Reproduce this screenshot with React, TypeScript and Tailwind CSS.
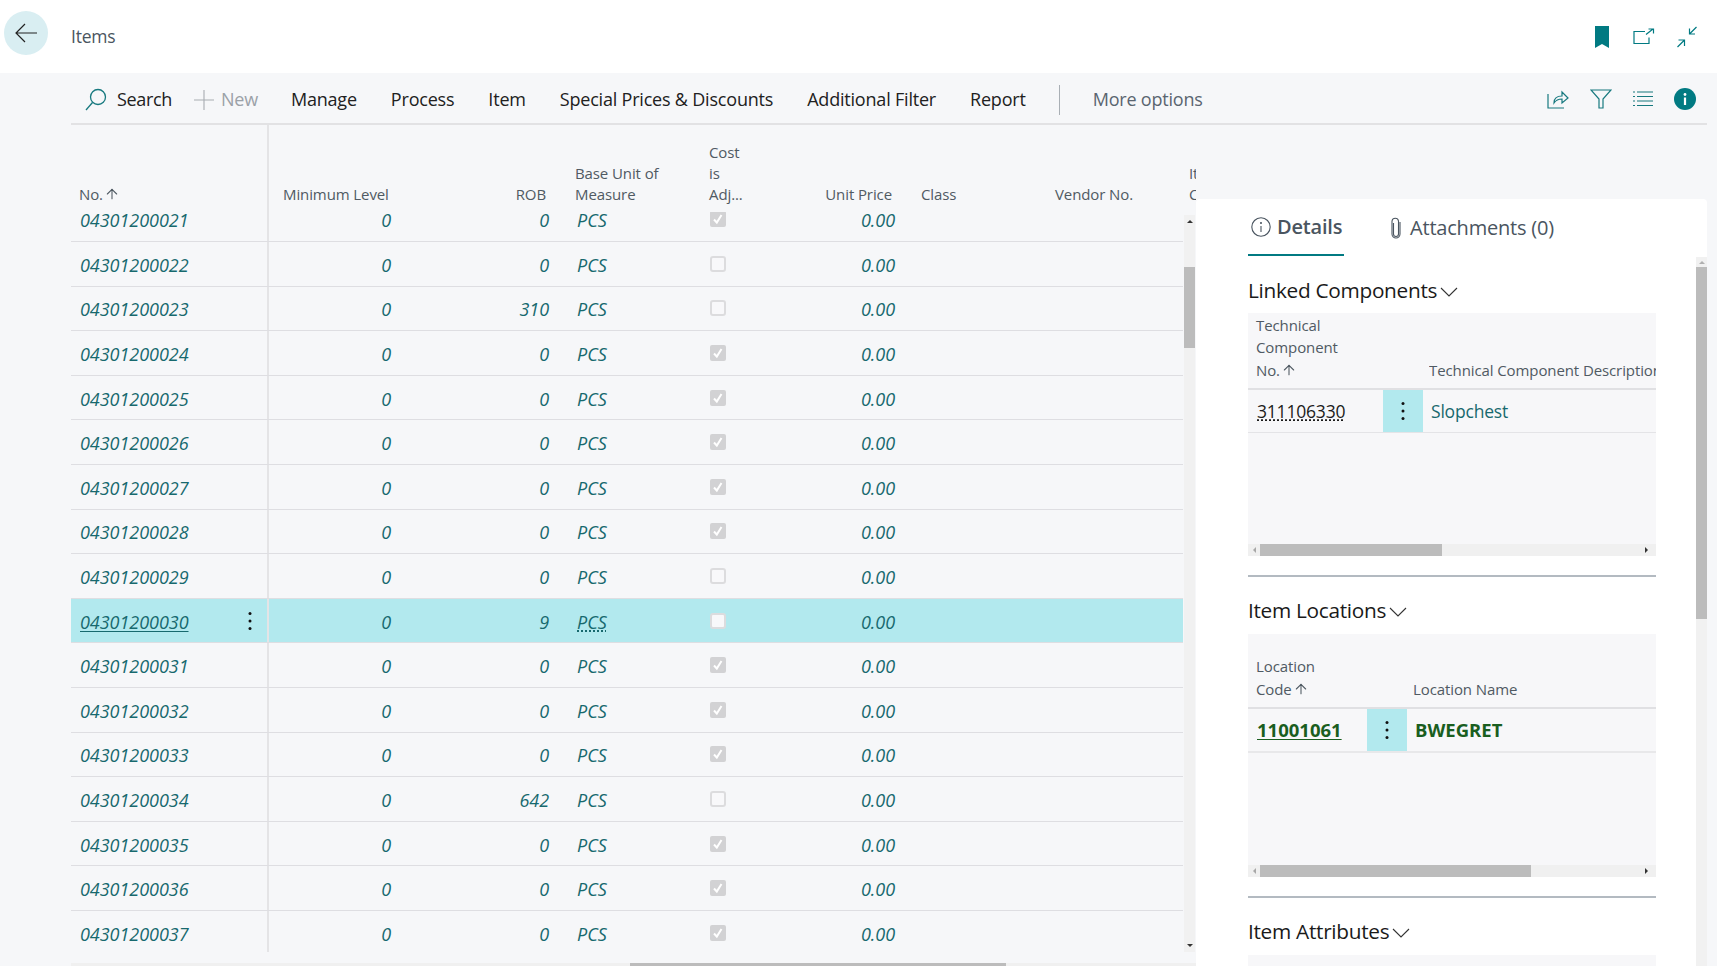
import { ArrowUp } from "lucide-react";

const font = "font-['Open_Sans','Noto_Sans',sans-serif]";

const rows = [
  { no: "04301200021", rob: "0", adjusted: true },
  { no: "04301200022", rob: "0", adjusted: false },
  { no: "04301200023", rob: "310", adjusted: false },
  { no: "04301200024", rob: "0", adjusted: true },
  { no: "04301200025", rob: "0", adjusted: true },
  { no: "04301200026", rob: "0", adjusted: true },
  { no: "04301200027", rob: "0", adjusted: true },
  { no: "04301200028", rob: "0", adjusted: true },
  { no: "04301200029", rob: "0", adjusted: false },
  { no: "04301200030", rob: "9", adjusted: false, selected: true },
  { no: "04301200031", rob: "0", adjusted: true },
  { no: "04301200032", rob: "0", adjusted: true },
  { no: "04301200033", rob: "0", adjusted: true },
  { no: "04301200034", rob: "642", adjusted: false },
  { no: "04301200035", rob: "0", adjusted: true },
  { no: "04301200036", rob: "0", adjusted: true },
  { no: "04301200037", rob: "0", adjusted: true },
];

const commands = ["Manage", "Process", "Item", "Special Prices & Discounts", "Additional Filter", "Report"];

function Dots({ className = "" }: { className?: string }) {
  return (
    <svg viewBox="0 0 4 20" className={`h-5 w-1 fill-[#111] ${className}`}>
      <circle cx="2" cy="2.5" r="1.5" />
      <circle cx="2" cy="10" r="1.5" />
      <circle cx="2" cy="17.5" r="1.5" />
    </svg>
  );
}

function Check({ on }: { on: boolean }) {
  if (!on) {
    return <div className="h-[16px] w-[16px] rounded-[3px] border-2 border-[#dcdcde] bg-[#f8f8fa]" />;
  }
  return (
    <div className="flex h-[16px] w-[16px] items-center justify-center rounded-[2px] bg-[#d2d2d4]">
      <svg viewBox="0 0 16 16" className="h-4 w-4 fill-none stroke-white stroke-2">
        <path d="M4 8.5l2.8 3L11.5 4" />
      </svg>
    </div>
  );
}

function SortArrow() {
  return <ArrowUp className="ml-[1px] h-4 w-4 text-[#505a63]" strokeWidth={1.6} />;
}

function HScroll({ thumb }: { thumb: string }) {
  return (
    <div className="flex h-3 items-center bg-[#f0f0f0]">
      <div className="flex w-3 shrink-0 justify-center">
        <div className="h-0 w-0 border-y-[3px] border-r-[3px] border-y-transparent border-r-[#a8a8a8]" />
      </div>
      <div className="flex-1">
        <div className={`h-3 bg-[#bcbcbc] ${thumb}`} />
      </div>
      <div className="flex w-5 shrink-0 justify-center">
        <div className="h-0 w-0 border-y-[3px] border-l-[3px] border-y-transparent border-l-[#333]" />
      </div>
    </div>
  );
}

function SectionTitle({ text }: { text: string }) {
  return (
    <div className="flex items-center gap-[3px] text-[20.8px] leading-7 font-medium tracking-[-0.3px] text-[#1a1a1a]">
      {text}
      <svg viewBox="0 0 18 10" className="mt-[3px] h-[10px] w-[18px] fill-none stroke-[#333] stroke-[1.1]">
        <path d="M1 1l8 8 8-8" />
      </svg>
    </div>
  );
}

function GridHeader() {
  const cell = "text-[15px] leading-[21px] tracking-[-0.1px] text-[#505a63]";
  return (
    <div className={`flex h-[87px] items-end pb-[7px] ${cell}`}>
      <div className="-mb-[7px] flex h-[87px] w-[198px] shrink-0 items-end border-r-2 border-[#e4e4e6] pb-[7px] pl-2">
        <span>No.</span>
        <span className="mb-[3px]">
          <SortArrow />
        </span>
      </div>
      <div className="w-[119px] shrink-0 whitespace-nowrap pl-[14px]">Minimum Level</div>
      <div className="w-[158px] shrink-0 text-right">ROB</div>
      <div className="w-[163px] shrink-0 pl-[29px]">
        Base Unit of
        <br />
        Measure
      </div>
      <div className="w-[62px] shrink-0">
        Cost
        <br />
        is
        <br />
        Adj...
      </div>
      <div className="w-[121px] shrink-0 text-right">Unit Price</div>
      <div className="w-[163px] shrink-0 pl-[29px]">Class</div>
      <div className="w-[134px] shrink-0 whitespace-nowrap">Vendor No.</div>
      <div className="w-[20px] shrink-0 overflow-hidden">
        Item
        <br />
        Cat
      </div>
    </div>
  );
}

function GridRow({ row }: { row: (typeof rows)[number] }) {
  const selected = row.selected;
  return (
    <div
      className={`flex h-[44.6px] w-[1112px] items-center border-b border-[#dedee2] text-[18px] tracking-[-0.05px] text-[#17696e] italic ${
        selected ? "bg-[#b2e9ee]" : ""
      }`}
    >
      <div className="flex h-full w-[198px] shrink-0 items-center justify-between border-r-2 border-[#e4e4e6] pt-[3px] pr-[15px] pl-[9px]">
        <span className={selected ? "underline underline-offset-2" : ""}>{row.no}</span>
        {selected && <Dots className="-mt-[3px]" />}
      </div>
      <div className="w-[122px] shrink-0 pt-[3px] text-right">0</div>
      <div className="w-[158px] shrink-0 pt-[3px] text-right">{row.rob}</div>
      <div className="w-[161px] shrink-0 pt-[3px] pl-[28px]">
        <span className={selected ? "underline decoration-dotted underline-offset-2" : ""}>PCS</span>
      </div>
      <div className="w-[37px] shrink-0">
        <Check on={row.adjusted} />
      </div>
      <div className="w-[148px] shrink-0 pt-[3px] text-right">0.00</div>
    </div>
  );
}

function GridScrollbar() {
  return (
    <div className="mt-[3px] flex h-[737px] w-[11px] flex-col items-center bg-[#f1f1f1]">
      <div className="mt-[5px] h-0 w-0 border-x-[3px] border-b-[3px] border-x-transparent border-b-[#333]" />
      <div className="mt-[44px] h-[81px] w-[11px] bg-[#bcbcbc]" />
      <div className="flex-1" />
      <div className="mb-[5px] h-0 w-0 border-x-[3px] border-t-[3px] border-x-transparent border-t-[#333]" />
    </div>
  );
}

export default function App() {
  return (
    <div className={`flex h-screen flex-col overflow-hidden bg-[#f6f7f9] ${font}`}>
      <header className="flex h-[73px] shrink-0 items-center bg-white pr-[19px] pl-1">
        <button className="-mt-[7px] flex h-[44px] w-[44px] items-center justify-center rounded-full bg-[#d9eef2]">
          <svg viewBox="0 0 24 24" className="h-6 w-6 fill-none stroke-[#222] stroke-[1.2]">
            <path d="M23 12H2M11 3l-9 9 9 9" />
          </svg>
        </button>
        <div className="ml-[23px] text-[17.5px] tracking-[-0.2px] text-[#4a5560]">Items</div>
        <div className="ml-auto flex items-center">
          <svg viewBox="0 0 14 22" className="h-[22px] w-[14px] fill-[#017a82]">
            <path d="M0 0h14v22l-7-4-7 4z" />
          </svg>
          <svg viewBox="0 0 22 18" className="ml-[24px] h-[18px] w-[22px] fill-none stroke-[#017a82] stroke-[1.2]">
            <path d="M12 3.5H1v12h15v-6M13 6.5l7-5.5M15.5 1H20.5v4.5" />
          </svg>
          <svg viewBox="0 0 22 22" className="ml-[21px] h-[22px] w-[22px] fill-none stroke-[#017a82] stroke-[1.2]">
            <path d="M20.5 1l-7 7M13.5 2.5V8H19M1.5 21l7-7M2.5 14h6v6" />
          </svg>
        </div>
      </header>

      <div className="mr-[10px] ml-[71px] flex h-[52px] shrink-0 items-center border-b-2 border-[#e2e2e4] pt-[3px] text-[18px] tracking-[-0.2px] text-[#212121]">
        <div className="ml-[14px] flex items-center gap-[10px]">
          <svg viewBox="0 0 22 24" className="h-[24px] w-[22px] fill-none stroke-[#17797f] stroke-[1.3]">
            <circle cx="13" cy="9" r="7.5" />
            <path d="M7.5 14.5L1 22" />
          </svg>
          <span className="tracking-[-0.35px]">Search</span>
        </div>
        <div className="ml-[22px] flex items-center gap-[7px] text-[#9ba1a8]">
          <svg viewBox="0 0 20 20" className="h-5 w-5 fill-none stroke-[#a8adb2] stroke-[1.1]">
            <path d="M10 0v20M0 10h20" />
          </svg>
          New
        </div>
        <div className="ml-[33px] flex items-center gap-[34px]">
          {commands.map((c) => (
            <span key={c}>{c}</span>
          ))}
        </div>
        <div className="mx-[33px] h-[30px] w-px bg-[#a9afb5]" />
        <span className="text-[#5a6570]">More options</span>
        <div className="mr-[13px] ml-auto flex -translate-y-[1px] items-center gap-[21px]">
          <svg viewBox="0 0 22 20" className="h-5 w-[22px] fill-none stroke-[#17797f] stroke-[1.2]">
            <path d="M1 5v14h16M7 14c0-5 3-7 8-7V3l6 6-6 5v-4c-4 0-6 1-8 4z" />
          </svg>
          <svg viewBox="0 0 22 20" className="h-5 w-[22px] fill-none stroke-[#17797f] stroke-[1.2]">
            <path d="M1 1h20l-8 9v9h-4v-9z" />
          </svg>
          <svg viewBox="0 0 20 16" className="h-4 w-5 fill-none stroke-[#17797f] stroke-[1.2]">
            <path d="M0 1h2M4 1h16M0 5.5h2M4 5.5h16M0 10h2M4 10h16M0 14.5h2M4 14.5h16" />
          </svg>
          <svg viewBox="0 0 22 22" className="-mr-[2px] h-[22px] w-[22px]">
            <circle cx="11" cy="11" r="11" fill="#017a82" />
            <circle cx="11" cy="6.5" r="1.4" fill="#fff" />
            <rect x="9.9" y="9.5" width="2.2" height="7.5" fill="#fff" />
          </svg>
        </div>
      </div>

      <div className="flex min-h-0 flex-1">
        <div className="ml-[71px] flex w-[1125px] shrink-0 flex-col overflow-hidden">
          <GridHeader />
          <div className="flex h-[740px] shrink-0">
            <div className="h-full w-[1113px] overflow-hidden">
              <div className="-mt-[14.6px]">
                {rows.map((row) => (
                  <GridRow key={row.no} row={row} />
                ))}
              </div>
            </div>
            <GridScrollbar />
          </div>
          <div className="mt-[11px] h-[3px] w-full bg-[#f0f0f0]">
            <div className="ml-[559px] h-[3px] w-[376px] bg-[#bcbcbc]" />
          </div>
        </div>

        <div className="mt-[74px] mr-[10px] flex min-w-0 flex-1 flex-col rounded-t-sm bg-white">
          <div className="flex h-[58px] shrink-0 items-start pl-[52px] text-[20px] tracking-[-0.2px] text-[#4a5560]">
            <div className="flex h-[57px] w-[96px] items-center gap-[6px] border-b-2 border-[#017a82] pl-[3px] font-semibold whitespace-nowrap">
              <svg viewBox="0 0 20 20" className="h-5 w-5 shrink-0 fill-none stroke-[#4a5560] stroke-[1.1]">
                <circle cx="10" cy="10" r="9.2" />
                <path d="M10 9v6" />
                <circle cx="10" cy="6" r=".5" />
              </svg>
              Details
            </div>
            <div className="ml-[46px] flex h-[57px] items-center gap-[8px] whitespace-nowrap">
              <svg viewBox="0 0 12 22" className="h-[22px] w-3 fill-none stroke-[#4a5560] stroke-[1.1]">
                <path d="M3.5 6v11a2.5 2.5 0 0 0 5 0V4a3.3 3.3 0 0 0-6.5 0v13a4 4 0 0 0 8 0V5" />
              </svg>
              Attachments (0)
            </div>
          </div>

          <div className="flex min-h-0 flex-1">
            <div className="ml-[52px] w-[408px] shrink-0">
              <div className="mt-[19px]">
                <SectionTitle text="Linked Components" />
              </div>
              <div className="mt-[9px] flex h-[243px] flex-col bg-[#f7f7f9]">
                <div className="flex h-[77px] shrink-0 items-end border-b-2 border-[#e0e0e3] pb-[7px] text-[15px] leading-[22.5px] tracking-[-0.1px] text-[#505a63]">
                  <div className="w-[181px] shrink-0 pl-2">
                    Technical
                    <br />
                    Component
                    <br />
                    <span className="inline-flex items-center">
                      No.
                      <SortArrow />
                    </span>
                  </div>
                  <div className="overflow-hidden whitespace-nowrap">Technical Component Description</div>
                </div>
                <div className="flex h-[43px] shrink-0 items-center border-b border-[#e4e4e7] text-[17.5px] tracking-[-0.2px]">
                  <div className="w-[135px] shrink-0 pl-[9px] text-[#1c1c1c] underline decoration-dotted underline-offset-2">
                    311106330
                  </div>
                  <div className="flex h-full w-[40px] shrink-0 items-center justify-center bg-[#b2e9ee]">
                    <Dots />
                  </div>
                  <div className="pl-2 text-[#17696e]">Slopchest</div>
                </div>
                <div className="flex-1" />
                <HScroll thumb="w-[182px]" />
              </div>
              <div className="mt-[19px] h-[2px] bg-[#b3bac1]" />

              <div className="mt-[19px]">
                <SectionTitle text="Item Locations" />
              </div>
              <div className="mt-[10px] flex h-[243px] flex-col bg-[#f7f7f9]">
                <div className="flex h-[75px] shrink-0 items-end border-b-2 border-[#e0e0e3] pb-[7px] text-[15px] leading-[22.5px] tracking-[-0.1px] text-[#505a63]">
                  <div className="w-[165px] shrink-0 pl-2">
                    Location
                    <br />
                    <span className="inline-flex items-center">
                      Code
                      <SortArrow />
                    </span>
                  </div>
                  <div>Location Name</div>
                </div>
                <div className="flex h-[44px] shrink-0 items-center border-b-2 border-[#e8e8ea] text-[18.5px] font-bold tracking-[0px] text-[#1a5e1f]">
                  <div className="w-[119px] shrink-0 pl-[9px] underline underline-offset-2">11001061</div>
                  <div className="flex h-full w-[40px] shrink-0 items-center justify-center bg-[#b2e9ee]">
                    <Dots />
                  </div>
                  <div className="pl-2">BWEGRET</div>
                </div>
                <div className="flex-1" />
                <HScroll thumb="w-[271px]" />
              </div>
              <div className="mt-[19px] h-[2px] bg-[#b3bac1]" />

              <div className="mt-[19px]">
                <SectionTitle text="Item Attributes" />
              </div>
              <div className="mt-[10px] h-12 bg-[#f7f7f9]" />
            </div>

            <div className="mt-0 ml-auto flex h-full w-[11px] flex-col items-center bg-[#f1f1f1]">
              <div className="mt-[4px] h-0 w-0 border-x-[3px] border-b-[3px] border-x-transparent border-b-[#b0b0b0]" />
              <div className="mt-[3px] h-[352px] w-[11px] bg-[#bcbcbc]" />
            </div>
          </div>
        </div>
      </div>
    </div>
  );
}
